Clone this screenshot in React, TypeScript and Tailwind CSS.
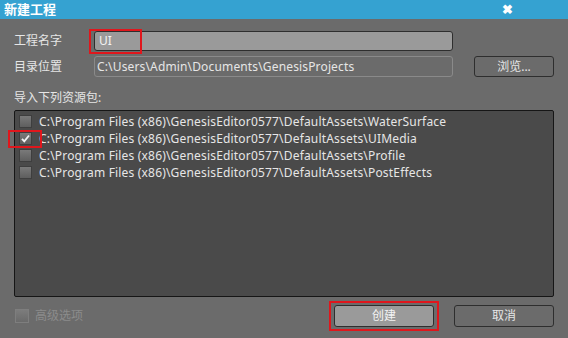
import React from "react";

const FONT = { fontFamily: '"Noto Sans", "Noto Sans CJK SC", sans-serif' };

const paths = [
  "C:\\Program Files (x86)\\GenesisEditor0577\\DefaultAssets\\WaterSurface",
  "C:\\Program Files (x86)\\GenesisEditor0577\\DefaultAssets\\UIMedia",
  "C:\\Program Files (x86)\\GenesisEditor0577\\DefaultAssets\\Profile",
  "C:\\Program Files (x86)\\GenesisEditor0577\\DefaultAssets\\PostEffects",
];

function Check({ checked, highlight }: { checked?: boolean; highlight?: boolean }) {
  return (
    <div className="relative w-[13px] h-[13px] shrink-0 bg-gradient-to-b from-[#7a7a7a] to-[#5e5e5e] border border-[#3e3e3e]">
      {checked && (
        <svg viewBox="0 0 13 13" className="absolute inset-0 w-[13px] h-[13px] -left-px -top-px">
          <path d="M3 6.8 L5.3 9.3 L10 3.5" stroke="#f2f2f2" strokeWidth="1.8" fill="none" />
        </svg>
      )}
      {highlight && (
        <div className="absolute -left-[12px] -top-[3px] w-[34px] h-[18px] border-2 border-[#e0161c]" />
      )}
    </div>
  );
}

export default function App() {
  return (
    <div className="w-[568px] h-[338px] bg-[#6b6b6b] flex flex-col text-[12px] leading-none text-[#e6e6e6]" style={FONT}>
      <div className="h-[19px] bg-[#35a2d1] flex items-center justify-between pl-[4px] pr-[55px]">
        <span className="text-white text-[13px] font-bold leading-none">新建工程</span>
        <span className="text-white text-[13px] font-bold leading-none">✖</span>
      </div>
      <div className="flex flex-col px-[14px] pt-[12px]">
        <div className="flex items-center h-[20px]">
          <span className="w-[80px]">工程名字</span>
          <div className="relative w-[359px] h-[20px] bg-[#9a9a9a] border border-[#2e2e2e] rounded-[3px] flex items-center pl-[4px] text-[#f4f4f4]">
            UI
            <div className="absolute -left-[6px] -top-[3px] w-[53px] h-[25px] border-2 border-[#e0161c]" />
          </div>
        </div>
        <div className="flex items-center h-[21px] mt-[5px]">
          <span className="w-[80px]">目录位置</span>
          <div className="w-[359px] h-[21px] border border-[#8a8a8a] rounded-[3px] flex items-center pl-[2px] tracking-[0.15px]">
            C:\Users\Admin\Documents\GenesisProjects
          </div>
          <div className="ml-[21px] w-[80px] h-[21px] border border-[#2e2e2e] rounded-[3px] flex items-center justify-center">
            浏览...
          </div>
        </div>
        <div className="mt-[11px] h-[20px] flex items-center">导入下列资源包:</div>
        <div className="mt-[2px] h-[187px] bg-[#4a4a4a] border border-[#161616] rounded-[2px] flex flex-col pt-[2px] pl-[4px]">
          {paths.map((p, i) => (
            <div key={i} className="flex items-center h-[17px] gap-[7px]">
              <Check checked={i === 1} highlight={i === 1} />
              <span className="whitespace-nowrap tracking-[0.18px]">{p}</span>
            </div>
          ))}
        </div>
        <div className="flex items-center mt-[8px] h-[22px]">
          <div className="flex items-center gap-[6px] ml-[1px] text-[#8c8c8c]">
            <div className="w-[14px] h-[14px] bg-gradient-to-b from-[#7c7c7c] to-[#6a6a6a] border border-[#7e7e7e]" />
            <span>高级选项</span>
          </div>
          <div className="relative ml-auto w-[100px] h-[22px] bg-[#9a9a9a] border border-[#2e2e2e] rounded-[3px] flex items-center justify-center text-[#f4f4f4]">
            创建
            <div className="absolute -left-[6px] -top-[5px] w-[110px] h-[30px] border-2 border-[#e0161c]" />
          </div>
          <div className="ml-[20px] w-[100px] h-[22px] border border-[#2e2e2e] rounded-[3px] flex items-center justify-center">
            取消
          </div>
        </div>
      </div>
    </div>
  );
}
